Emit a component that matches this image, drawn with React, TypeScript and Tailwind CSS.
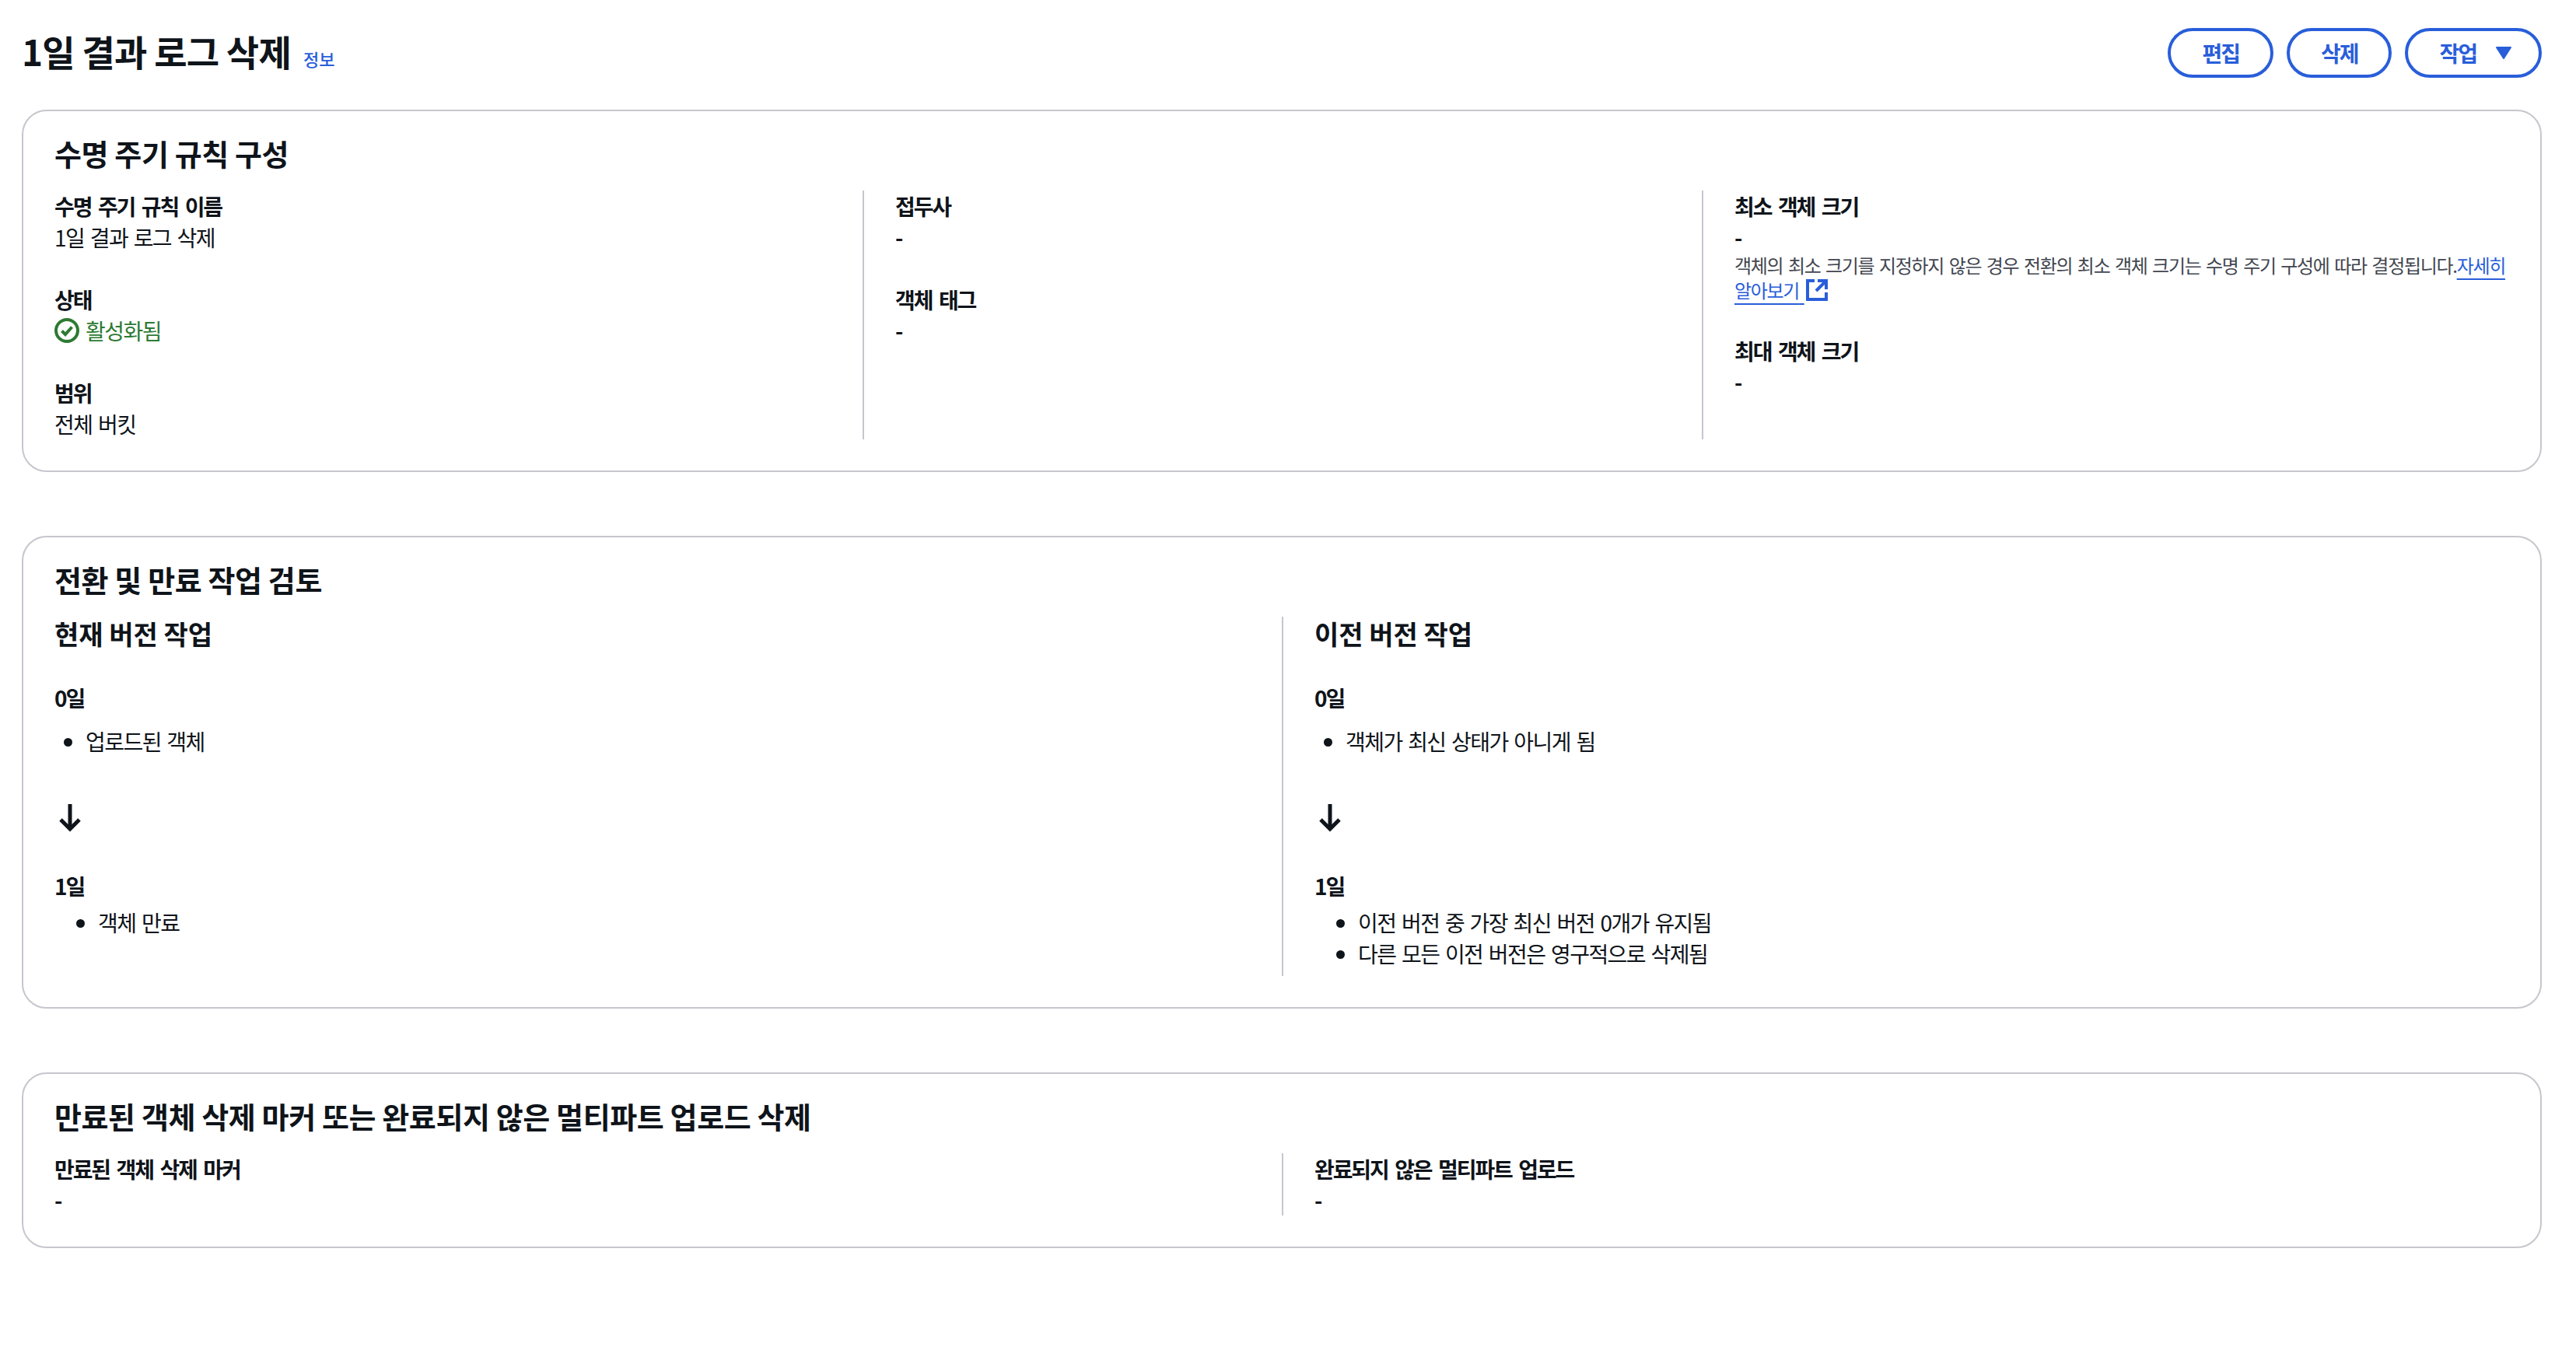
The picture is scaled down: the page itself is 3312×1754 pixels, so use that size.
import type { ReactNode } from "react";

const labelClass = "text-[28px] leading-[40px] font-bold tracking-[-2.1px] [word-spacing:4.3px] text-[#0f141a]";
const valueClass = "text-[28px] leading-[40px] tracking-[-1.55px] [word-spacing:2.8px] text-[#0f141a]";
const blue = "text-[#295eda]";

function Field({ label, children }: { label: string; children: ReactNode }) {
  return (
    <div>
      <div className={labelClass}>{label}</div>
      <div className={valueClass}>{children}</div>
    </div>
  );
}

function Dash() {
  return <span className="font-bold">-</span>;
}

function Card({ title, children }: { title: string; children: ReactNode }) {
  return (
    <section className="rounded-[32px] border-2 border-[#c6c6cd] bg-white px-[40px] pt-[30px] pb-[40px]">
      <h2 className="mb-[24px] text-[38px] leading-[48px] font-bold tracking-[-0.4px] text-[#0f141a]">{title}</h2>
      {children}
    </section>
  );
}

function Button({ children }: { children: ReactNode }) {
  return (
    <button className="flex h-[64px] items-center justify-center rounded-[32px] border-4 border-[#295eda] bg-white px-[40px] text-[28px] font-bold tracking-[-2px] text-[#295eda]">
      {children}
    </button>
  );
}

function ArrowDown() {
  return (
    <svg width="40" height="40" viewBox="0 0 40 40" fill="none" stroke="#0f141a" strokeWidth="5">
      <path d="M20 3v31" />
      <path d="M8 23l12 12 12-12" />
    </svg>
  );
}

function Timeline({ heading, first, second }: { heading: string; first: string[]; second: string[] }) {
  return (
    <div className="pb-[9px]">
      <h3 className="mb-[40px] text-[34px] leading-[44px] font-bold text-[#0f141a]">{heading}</h3>
      <div className={labelClass}>0일</div>
      <ul className={`mt-[16px] list-disc pl-[40px] ${valueClass}`}>
        {first.map((item) => (
          <li key={item}>{item}</li>
        ))}
      </ul>
      <div className="mt-[58px] mb-[48px] flex">
        <ArrowDown />
      </div>
      <div className={labelClass}>1일</div>
      <ul className={`mt-[7px] list-disc pl-[56px] ${valueClass}`}>
        {second.map((item) => (
          <li key={item}>{item}</li>
        ))}
      </ul>
    </div>
  );
}

export default function App() {
  return (
    <main className="min-h-screen bg-white pr-[44px] pb-[148px] pl-[28px] font-['Noto_Sans_CJK_KR','Noto_Sans',sans-serif]">
      <header className="flex h-[141px] items-start justify-between pt-[36px]">
        <div className="flex items-baseline gap-[16px]">
          <h1 className="text-[46px] leading-[58px] font-bold tracking-[-0.8px] text-[#0f141a]">1일 결과 로그 삭제</h1>
          <a className={`text-[22px] font-medium ${blue}`}>정보</a>
        </div>
        <div className="flex gap-[17px]">
          <Button>편집</Button>
          <Button>삭제</Button>
          <Button>
            작업
            <svg className="mr-[-6px] ml-[24px]" width="22" height="18" viewBox="0 0 22 18" fill="#295eda" stroke="#295eda" strokeWidth="2" strokeLinejoin="round">
              <path d="M2 2h18L11 16z" />
            </svg>
          </Button>
        </div>
      </header>

      <div className="flex flex-col gap-[82px]">
        <Card title="수명 주기 규칙 구성">
          <div className="grid grid-cols-[1039px_1079px_1fr]">
            <div className="flex flex-col gap-[40px]">
              <Field label="수명 주기 규칙 이름">1일 결과 로그 삭제</Field>
              <Field label="상태">
                <span className="flex items-center gap-[8px] text-[#2d7a33]">
                  <svg width="32" height="32" viewBox="0 0 32 32" fill="none" stroke="#2d7a33" strokeWidth="4">
                    <circle cx="16" cy="16" r="14" />
                    <path d="M9.5 16.5l4.5 4.5 8.5-9.5" />
                  </svg>
                  활성화됨
                </span>
              </Field>
              <Field label="범위">전체 버킷</Field>
            </div>
            <div className="flex flex-col gap-[40px] border-l-2 border-[#c6c6cd] pl-[40px]">
              <Field label="접두사"><Dash /></Field>
              <Field label="객체 태그"><Dash /></Field>
            </div>
            <div className="flex flex-col gap-[40px] border-l-2 border-[#c6c6cd] pl-[40px]">
              <div className="pb-[2px]">
                <div className={labelClass}>최소 객체 크기</div>
                <div className={valueClass}><Dash /></div>
                <p className="text-[24px] leading-[32px] tracking-[-1.3px] [word-spacing:2.5px] text-[#424650]">
                  객체의 최소 크기를 지정하지 않은 경우 전환의 최소 객체 크기는 수명 주기 구성에 따라 결정됩니다.
                  <a className={`underline decoration-2 underline-offset-[7px] ${blue}`}>
                    <span className="whitespace-nowrap">자세히</span> 알아보기{" "}
                  </a>
                  <svg className="ml-[2px] inline-block align-[-4px]" width="28" height="28" viewBox="0 0 28 28" fill="none" stroke="#295eda" strokeWidth="4">
                    <path d="M11 2H2v24h24v-9" />
                    <path d="M15 2h11v11" />
                    <path d="M26 2L13 15" />
                  </svg>
                </p>
              </div>
              <Field label="최대 객체 크기"><Dash /></Field>
            </div>
          </div>
        </Card>

        <Card title="전환 및 만료 작업 검토">
          <div className="grid grid-cols-2">
            <Timeline heading="현재 버전 작업" first={["업로드된 객체"]} second={["객체 만료"]} />
            <div className="border-l-2 border-[#c6c6cd] pl-[40px]">
              <Timeline
                heading="이전 버전 작업"
                first={["객체가 최신 상태가 아니게 됨"]}
                second={["이전 버전 중 가장 최신 버전 0개가 유지됨", "다른 모든 이전 버전은 영구적으로 삭제됨"]}
              />
            </div>
          </div>
        </Card>

        <Card title="만료된 객체 삭제 마커 또는 완료되지 않은 멀티파트 업로드 삭제">
          <div className="grid grid-cols-2">
            <Field label="만료된 객체 삭제 마커"><Dash /></Field>
            <div className="border-l-2 border-[#c6c6cd] pl-[40px]">
              <Field label="완료되지 않은 멀티파트 업로드"><Dash /></Field>
            </div>
          </div>
        </Card>
      </div>
    </main>
  );
}
